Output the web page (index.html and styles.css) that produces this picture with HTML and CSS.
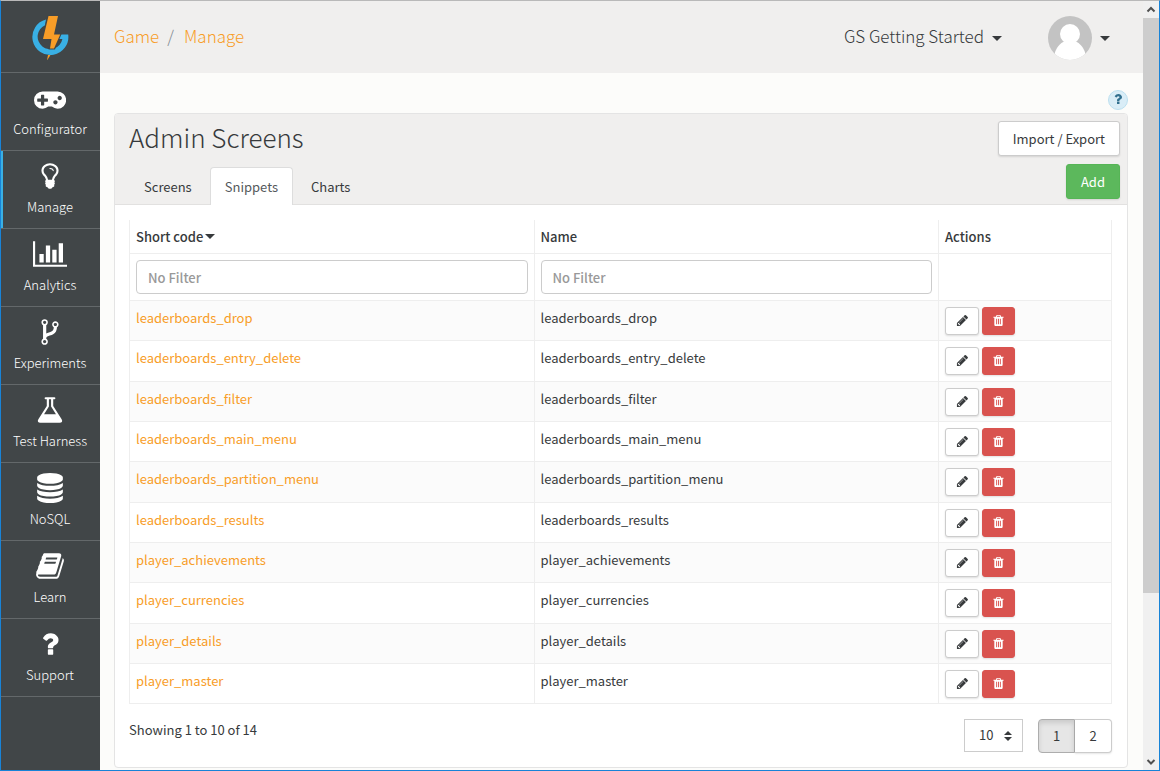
FILE: index.html
```html
<!DOCTYPE html>
<html lang="en">
<head>
<meta charset="utf-8">
<title>Admin Screens</title>
<link rel="stylesheet" href="styles.css">
</head>
<body>
<svg class="defs" aria-hidden="true">
  <symbol id="pencil" viewBox="0 0 1792 1792"><path d="M491 1536l91-91-235-235-91 91v107h128v128h107zm523-928q0-22-22-22-10 0-17 7l-542 542q-7 7-7 17 0 22 22 22 10 0 17-7l542-542q7-7 7-17zm-54-192l416 416-832 832h-416v-416zm683 96q0 53-37 90l-166 166-416-416 166-165q36-38 90-38 53 0 91 38l235 234q37 39 37 91z"/></symbol>
  <symbol id="trash" viewBox="0 0 1792 1792"><path d="M704 1376v-704q0-14-9-23t-23-9h-64q-14 0-23 9t-9 23v704q0 14 9 23t23 9h64q14 0 23-9t9-23zm256 0v-704q0-14-9-23t-23-9h-64q-14 0-23 9t-9 23v704q0 14 9 23t23 9h64q14 0 23-9t9-23zm256 0v-704q0-14-9-23t-23-9h-64q-14 0-23 9t-9 23v704q0 14 9 23t23 9h64q14 0 23-9t9-23zm-544-992h448l-48-117q-7-9-17-11h-317q-10 2-17 11zm928 32v64q0 14-9 23t-23 9h-96v948q0 83-47 143.5t-113 60.5h-832q-66 0-113-58.5t-47-141.5v-952h-96q-14 0-23-9t-9-23v-64q0-14 9-23t23-9h309l70-167q15-37 54-63t79-26h320q40 0 79 26t54 63l70 167h309q14 0 23 9t9 23z"/></symbol>
  <symbol id="question" viewBox="0 0 1792 1792"><path d="M1088 1256v240q0 16-12 28t-28 12h-240q-16 0-28-12t-12-28v-240q0-16 12-28t28-12h240q16 0 28 12t12 28zm316-600q0 54-15.5 101t-35 76.5-55 59.5-57.5 43.5-61 35.5q-41 23-68.5 65t-27.5 67q0 17-12 32.5t-28 15.5h-240q-15 0-25.5-18.5t-10.5-37.5v-45q0-83 65-156.5t143-108.5q59-27 84-56t25-76q0-42-46.5-74t-107.5-32q-65 0-108 29-35 25-107 115-13 16-31 16-12 0-25-8l-164-125q-13-10-15.5-25t5.5-28q160-266 464-266 80 0 161 31t146 83 106 127.5 41 158.5z"/></symbol>
</svg>
<div class="window">
  <nav class="sidebar" aria-label="Main">
    <a class="logo" href="#" aria-label="Home">
      <svg width="40" height="48" viewBox="0 0 40 48">
        <path d="M16 7.500A18 18 0 1 0 38.200 22.500H30L28.500 27H32.400A12.500 12.500 0 1 1 15 13.200Z" fill="#39b0e5"/>
        <path d="M17.500 3H29.500L25.500 21H32L25 37.500H18.500L20 28.500H11.500Z" fill="#414648"/>
        <path d="M18.500 4H28L24 22.500H30.200L24 36.500H20L21.500 27H13Z" fill="#f89d27"/>
        <path d="M18 43H20.500L17 48.500Z" fill="#f89d27"/>
      </svg>
    </a>
    <a class="nav-item" href="#"><svg class="nav-icon" viewBox="0 0 1920 1792"><path d="M832 1088v-128q0-14-9-23t-23-9h-192v-192q0-14-9-23t-23-9h-128q-14 0-23 9t-9 23v192h-192q-14 0-23 9t-9 23v128q0 14 9 23t23 9h192v192q0 14 9 23t23 9h128q14 0 23-9t9-23v-192h192q14 0 23-9t9-23zm576 64q0-53-37.500-90.500t-90.500-37.500-90.500 37.500-37.500 90.500 37.500 90.500 90.500 37.500 90.500-37.500 37.500-90.500zm256-256q0-53-37.500-90.500t-90.500-37.500-90.500 37.500-37.500 90.500 37.500 90.500 90.500 37.500 90.500-37.500 37.500-90.500zm256 128q0 212-150 362t-362 150q-192 0-338-128h-220q-146 128-338 128-212 0-362-150t-150-362 150-362 362-150h896q212 0 362 150t150 362z"/></svg>Configurator</a>
    <a class="nav-item active" href="#"><svg class="nav-icon" viewBox="0 0 1792 1792"><path d="M1120 576q0 13-9.500 22.500t-22.500 9.500-22.500-9.500-9.500-22.500q0-46-54-71t-106-25q-13 0-22.500-9.500t-9.500-22.500 9.500-22.500 22.500-9.500q50 0 99.500 16t87 54 37.500 90zm160 0q0-72-34.500-134t-90-101.500-123-62-136.500-22.500-136.500 22.500-123 62-90 101.500-34.500 134q0 101 68 180 10 11 30.500 33t30.500 33q128 153 141 298h228q13-145 141-298 10-11 30.500-33t30.500-33q68-79 68-180zm128 0q0 155-103 268-45 49-74.500 87t-59.500 95.500-34 107.500q47 28 47 82 0 37-25 64 25 27 25 64 0 52-45 81 13 23 13 47 0 46-31.500 71t-77.500 25q-20 44-60 70t-87 26-87-26-60-70q-46 0-77.500-25t-31.500-71q0-24 13-47-45-29-45-81 0-37 25-64-25-27-25-64 0-54 47-82-4-50-34-107.500t-59.500-95.500-74.500-87q-103-113-103-268 0-99 44.500-184.500t117-142 164-89 186.500-32.500 186.500 32.500 164 89 117 142 44.500 184.500z"/></svg>Manage</a>
    <a class="nav-item" href="#"><svg class="nav-icon" viewBox="0 0 2048 1792"><path d="M640 896v512h-256v-512h256zm384-512v1024h-256v-1024h256zm1024 1152v128h-2048v-1536h128v1408h1920zm-640-896v768h-256v-768h256zm384-384v1152h-256v-1152h256z"/></svg>Analytics</a>
    <a class="nav-item" href="#"><svg class="nav-icon" viewBox="0 0 1792 1792"><path d="M672 1472q0-40-28-68t-68-28-68 28-28 68 28 68 68 28 68-28 28-68zm0-1152q0-40-28-68t-68-28-68 28-28 68 28 68 68 28 68-28 28-68zm640 128q0-40-28-68t-68-28-68 28-28 68 28 68 68 28 68-28 28-68zm96 0q0 52-26 96.500t-70 69.500q-2 287-226 414-67 38-203 81-128 40-169.500 71t-41.500 100v26q44 25 70 69.500t26 96.500q0 80-56 136t-136 56-136-56-56-136q0-52 26-96.500t70-69.500v-820q-44-25-70-69.500t-26-96.500q0-80 56-136t136-56 136 56 56 136q0 52-26 96.500t-70 69.500v497q54-26 154-57 55-17 87.500-29.500t70.500-31 59-39.500 40.500-51 28-69.500 8.500-91.500q-44-25-70-69.500t-26-96.500q0-80 56-136t136-56 136 56 56 136z"/></svg>Experiments</a>
    <a class="nav-item" href="#"><svg class="nav-icon" viewBox="0 0 1792 1792"><path d="M1591 1448q56 89 21.500 152.500t-140.500 63.500h-1152q-106 0-140.500-63.500t21.500-152.500l503-793v-399h-64q-26 0-45-19t-19-45 19-45 45-19h512q26 0 45 19t19 45-19 45-45 19h-64v399zm-779-725l-272 429h712l-272-429-20-31v-436h-128v436z"/></svg>Test Harness</a>
    <a class="nav-item" href="#"><svg class="nav-icon" viewBox="0 0 1792 1792"><path d="M896 768q237 0 443-43t325-127v170q0 69-103 128t-280 93.500-385 34.500-385-34.500-280-93.500-103-128v-170q119 84 325 127t443 43zm0 768q237 0 443-43t325-127v170q0 69-103 128t-280 93.500-385 34.500-385-34.500-280-93.500-103-128v-170q119 84 325 127t443 43zm0-384q237 0 443-43t325-127v170q0 69-103 128t-280 93.500-385 34.500-385-34.500-280-93.500-103-128v-170q119 84 325 127t443 43zm0-1152q208 0 385 34.500t280 93.500 103 128v128q0 69-103 128t-280 93.500-385 34.500-385-34.500-280-93.500-103-128v-128q0-69 103-128t280-93.500 385-34.500z"/></svg>NoSQL</a>
    <a class="nav-item" href="#"><svg class="nav-icon" viewBox="0 0 1792 1792"><path d="M1703 478q40 57 18 129l-275 906q-19 64-76.500 107.500t-122.500 43.500h-923q-77 0-148.500-53.500t-99.500-131.500q-24-67-2-127 0-4 3-27t4-37q1-8-3-21.500t-3-19.500q2-11 8-21t16.500-23.500 16.500-23.500q23-38 45-91.500t30-91.500q3-10 .5-30t-.5-28q3-11 17-28t17-23q21-36 42-92t25-90q1-9-2.500-32t.5-28q4-13 22-30.500t22-22.500q19-26 42.500-84.500t27.500-96.500q1-8-3-25.500t-2-26.500q2-8 9-18t18-23 17-21q8-12 16.500-30.500t15-35 16-36 19.500-32 26.500-23.500 36-11.500 47.500 5.500l-1 3q38-9 51-9h761q74 0 114 56t18 130l-274 906q-36 119-71.500 153.500t-128.500 34.500h-869q-27 0-38 15-11 16-1 43 24 70 144 70h923q29 0 56-15.500t35-41.500l300-987q7-22 5-57 38 15 59 43zm-1064 2q-4 13 2 22.500t20 9.500h608q13 0 25.500-9.500t16.500-22.500l21-64q4-13-2-22.500t-20-9.500h-608q-13 0-25.500 9.500t-16.500 22.500zm-83 256q-4 13 2 22.500t20 9.500h608q13 0 25.500-9.500t16.500-22.500l21-64q4-13-2-22.500t-20-9.500h-608q-13 0-25.500 9.500t-16.500 22.500z"/></svg>Learn</a>
    <a class="nav-item" href="#"><svg class="nav-icon" viewBox="0 0 1792 1792"><use href="#question"/></svg>Support</a>
  </nav>

  <div class="page">
    <header class="topbar">
      <div class="breadcrumb"><a href="#">Game</a><span class="slash">/</span><a href="#">Manage</a></div>
      <button class="menu-button" type="button"><span class="menu-label">GS Getting Started</span><span class="caret"></span></button>
      <button class="menu-button user" type="button" aria-label="Account">
        <svg width="44" height="44" viewBox="0 0 44 44"><clipPath id="disc"><circle cx="22" cy="22" r="22"/></clipPath><g clip-path="url(#disc)"><path fill="#c3c3c3" d="M0 0h44v44H0z"/><circle cx="22" cy="18" r="10" fill="#fff"/><path d="M17 25h10c5 2 9 7 10.500 13V46H6.500V38C8 32 12 27 17 25Z" fill="#fff"/></g></svg>
        <span class="caret"></span>
      </button>
    </header>

    <main class="content">
      <button class="help" type="button" aria-label="Help"><svg><use href="#question"/></svg></button>
      <section class="panel">
        <div class="panel-head">
          <div class="head-main">
            <h1>Admin Screens</h1>
            <div class="tabs"><a class="tab" href="#">Screens</a><a class="tab current" href="#">Snippets</a><a class="tab" href="#">Charts</a></div>
          </div>
          <div class="head-actions">
            <button class="btn" type="button">Import / Export</button>
            <button class="btn add" type="button">Add</button>
          </div>
        </div>
        <div class="panel-body">
          <table class="grid">
            <colgroup><col><col><col class="col-actions"></colgroup>
            <thead>
              <tr class="titles"><th>Short code<span class="caret sort"></span></th><th>Name</th><th>Actions</th></tr>
              <tr class="filters"><td><input type="text" placeholder="No Filter" aria-label="Filter by short code"></td><td><input type="text" placeholder="No Filter" aria-label="Filter by name"></td><td></td></tr>
            </thead>
            <tbody>
              <tr><td><a href="#">leaderboards_drop</a></td><td>leaderboards_drop</td><td><div class="actions"><button class="mini" type="button" aria-label="Edit"><svg><use href="#pencil"/></svg></button><button class="mini delete" type="button" aria-label="Delete"><svg><use href="#trash"/></svg></button></div></td></tr>
              <tr><td><a href="#">leaderboards_entry_delete</a></td><td>leaderboards_entry_delete</td><td><div class="actions"><button class="mini" type="button" aria-label="Edit"><svg><use href="#pencil"/></svg></button><button class="mini delete" type="button" aria-label="Delete"><svg><use href="#trash"/></svg></button></div></td></tr>
              <tr><td><a href="#">leaderboards_filter</a></td><td>leaderboards_filter</td><td><div class="actions"><button class="mini" type="button" aria-label="Edit"><svg><use href="#pencil"/></svg></button><button class="mini delete" type="button" aria-label="Delete"><svg><use href="#trash"/></svg></button></div></td></tr>
              <tr><td><a href="#">leaderboards_main_menu</a></td><td>leaderboards_main_menu</td><td><div class="actions"><button class="mini" type="button" aria-label="Edit"><svg><use href="#pencil"/></svg></button><button class="mini delete" type="button" aria-label="Delete"><svg><use href="#trash"/></svg></button></div></td></tr>
              <tr><td><a href="#">leaderboards_partition_menu</a></td><td>leaderboards_partition_menu</td><td><div class="actions"><button class="mini" type="button" aria-label="Edit"><svg><use href="#pencil"/></svg></button><button class="mini delete" type="button" aria-label="Delete"><svg><use href="#trash"/></svg></button></div></td></tr>
              <tr><td><a href="#">leaderboards_results</a></td><td>leaderboards_results</td><td><div class="actions"><button class="mini" type="button" aria-label="Edit"><svg><use href="#pencil"/></svg></button><button class="mini delete" type="button" aria-label="Delete"><svg><use href="#trash"/></svg></button></div></td></tr>
              <tr><td><a href="#">player_achievements</a></td><td>player_achievements</td><td><div class="actions"><button class="mini" type="button" aria-label="Edit"><svg><use href="#pencil"/></svg></button><button class="mini delete" type="button" aria-label="Delete"><svg><use href="#trash"/></svg></button></div></td></tr>
              <tr><td><a href="#">player_currencies</a></td><td>player_currencies</td><td><div class="actions"><button class="mini" type="button" aria-label="Edit"><svg><use href="#pencil"/></svg></button><button class="mini delete" type="button" aria-label="Delete"><svg><use href="#trash"/></svg></button></div></td></tr>
              <tr><td><a href="#">player_details</a></td><td>player_details</td><td><div class="actions"><button class="mini" type="button" aria-label="Edit"><svg><use href="#pencil"/></svg></button><button class="mini delete" type="button" aria-label="Delete"><svg><use href="#trash"/></svg></button></div></td></tr>
              <tr><td><a href="#">player_master</a></td><td>player_master</td><td><div class="actions"><button class="mini" type="button" aria-label="Edit"><svg><use href="#pencil"/></svg></button><button class="mini delete" type="button" aria-label="Delete"><svg><use href="#trash"/></svg></button></div></td></tr>
            </tbody>
          </table>
          <div class="table-foot">
            <p>Showing 1 to 10 of 14</p>
            <div class="page-size">
              <select aria-label="Rows per page"><option>10</option><option>25</option></select>
              <svg width="8" height="10" viewBox="0 0 8 10"><path d="M0 4L4 0L8 4ZM0 6H8L4 10Z"/></svg>
            </div>
            <div class="pager"><button type="button" class="on">1</button><button type="button">2</button></div>
          </div>
        </div>
      </section>
    </main>
  </div>

  <div class="scrollbar" aria-hidden="true">
    <svg class="arrow" viewBox="0 0 16 17"><path d="M4.500 10.500L8 7L11.500 10.500"/></svg>
    <div class="thumb"></div>
    <div class="track"></div>
    <svg class="arrow" viewBox="0 0 16 17"><path d="M4.500 7L8 10.500L11.500 7"/></svg>
  </div>
</div>
</body>
</html>
```
FILE: styles.css
```css
* { box-sizing: border-box; }

body {
  margin: 0;
  color: #373a3c;
  background: #fcfcfa;
  font: 13px/20px "Noto Sans CJK SC", "Noto Sans", sans-serif;
}

a { color: #f89d27; text-decoration: none; }
button, input, select { font: inherit; color: inherit; }
button { padding: 0; cursor: pointer; }
svg { display: block; fill: currentColor; }
.defs { position: absolute; width: 0; height: 0; }

.window {
  display: flex;
  min-height: 100vh;
  border: 1px solid #1883d7;
  border-top-color: #b9b9b9;
}

/* Sidebar */
.sidebar { flex: none; width: 99px; background: #414648; }
.logo {
  display: flex;
  justify-content: center;
  height: 72px;
  padding: 11px 1px 0 0;
  border-bottom: 1px solid #63686a;
}
.nav-item {
  display: flex;
  flex-direction: column;
  align-items: center;
  gap: 6px;
  height: 78px;
  padding: 10px 1px 0 0;
  border-bottom: 1px solid #63686a;
  color: #fff;
  font-weight: 300;
}
.nav-item.active { box-shadow: inset 2px 0 #39b0e5; }
.nav-icon { height: 30px; }

/* Top bar */
.page { flex: 1; min-width: 0; }
.topbar {
  display: flex;
  align-items: center;
  height: 72px;
  padding: 2px 33px 0 14px;
  background: #f0efee;
  font-size: 17px;
  font-weight: 300;
}
.breadcrumb { flex: 1; padding-bottom: 4px; }
.slash { margin: 0 10px 0 8px; color: #818a91; }
.menu-button {
  display: flex;
  align-items: center;
  gap: 8px;
  border: 0;
  background: none;
}
.menu-label { padding-bottom: 4px; }
.user { margin-left: 46px; }
.caret {
  width: 0;
  border: 5px solid transparent;
  border-top-color: #373a3c;
  border-bottom: 0;
}

/* Panel */
.content { padding: 17px 15px 2px 14px; }
.help {
  display: grid;
  place-items: center;
  width: 20px;
  height: 20px;
  margin: 0 0 3px auto;
  padding-bottom: 2px;
  border: 1px solid #bce0f0;
  border-radius: 10px;
  background: #d9edf7;
  color: #31708f;
}
.help svg { width: 14px; height: 14px; }
.panel { border: 1px solid #e4e4e4; border-radius: 4px; background: #fff; }
.panel-head {
  display: flex;
  height: 91px;
  padding: 7px 7px 0 14px;
  border-bottom: 1px solid #e2e1e0;
  border-radius: 3px 3px 0 0;
  background: #f0efee;
}
.head-main { flex: 1; display: flex; flex-direction: column; justify-content: space-between; }
h1 { margin: 0; font-size: 26px; font-weight: 300; line-height: 32px; }
.tabs { display: flex; margin-bottom: -1px; }
.tab {
  height: 38px;
  padding: 9px 14px 0;
  border: 1px solid transparent;
  border-bottom: 0;
  border-radius: 4px 4px 0 0;
  color: #373a3c;
}
.tab + .tab { margin-left: 3px; }
.tab.current { border-color: #ddd; background: #fff; color: #55595c; }
.head-actions { display: flex; flex-direction: column; align-items: flex-end; gap: 8px; }
.btn {
  height: 35px;
  padding: 0 14px;
  border: 1px solid #ccc;
  border-radius: 3px;
  background: #fff;
  box-shadow: 0 1px 2px rgba(0, 0, 0, .12);
}
.btn.add { border-color: #56b556; background: #5cb85c; color: #fff; }

/* Table */
.panel-body { padding: 15px 15px 14px 14px; }
.grid { width: 100%; border-collapse: collapse; table-layout: fixed; }
.col-actions { width: 173px; }
.grid th, .grid td {
  padding: 0 6px;
  border: 1px solid #eee;
  text-align: left;
  vertical-align: top;
}
.grid th { height: 33px; padding-top: 7px; border-top: 0; font-weight: 500; }
.grid th .sort { display: inline-block; margin-left: 2px; vertical-align: 3px; }
.filters td { height: 47px; padding-top: 6px; }
.filters input {
  display: block;
  width: 100%;
  height: 34px;
  padding: 2px 11px 0;
  border: 1px solid #ccc;
  border-radius: 4px;
  background: #fff;
  font-weight: 500;
}
.filters input::placeholder { color: #999; opacity: 1; }
.grid tbody td { height: 40px; padding-top: 7px; }
.grid tbody tr:nth-child(3n+2) td { height: 41px; }
.grid tbody tr:nth-child(odd) { background: #fbfbfb; }
.grid tbody td:last-child { padding-top: 6px; }
.actions { display: flex; gap: 3px; }
.mini {
  display: grid;
  place-items: center;
  width: 34px;
  height: 28px;
  border: 1px solid #ccc;
  border-radius: 3px;
  background: #fff;
  box-shadow: 0 1px 2px rgba(0, 0, 0, .12);
}
.mini.delete { width: 33px; border-color: #d9534f; background: #d9534f; color: #fff; }
.mini svg { width: 13px; height: 13px; }

.table-foot { display: flex; padding-top: 15px; }
.table-foot p { flex: 1; margin: 1px 0 0; }
.page-size { position: relative; }
.page-size select {
  appearance: none;
  display: block;
  width: 59px;
  height: 33px;
  padding: 0 14px;
  border: 1px solid #ccc;
  border-radius: 0;
  background: #fff;
}
.page-size svg { position: absolute; top: 12px; right: 11px; pointer-events: none; }
.pager { display: flex; margin-left: 15px; }
.pager button {
  width: 37px;
  height: 34px;
  border: 1px solid #ccc;
  border-left: 0;
  border-radius: 0 4px 4px 0;
  background: #fff;
  box-shadow: 0 1px 2px rgba(0, 0, 0, .1);
}
.pager .on {
  border: 1px solid #adadad;
  border-radius: 4px 0 0 4px;
  background: #e6e6e6;
  box-shadow: inset 0 3px 5px rgba(0, 0, 0, .12);
}

/* Scrollbar */
.scrollbar { flex: none; display: flex; flex-direction: column; width: 16px; background: #f0f0f0; }
.arrow { width: 16px; height: 17px; fill: none; stroke: #505050; stroke-width: 2; }
.thumb { flex: 575; background: #cdcdcd; }
.track { flex: 160; }
```
